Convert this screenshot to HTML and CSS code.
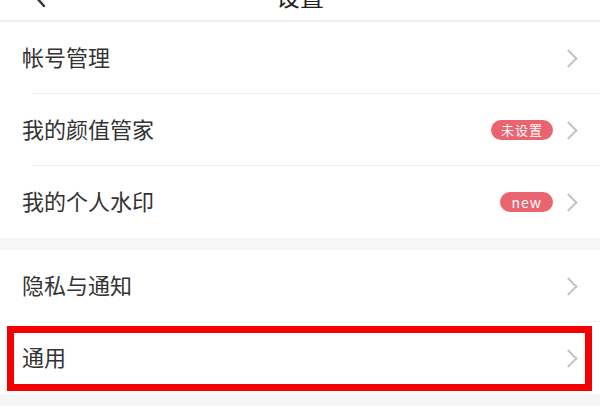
FILE: index.html
```html
<!DOCTYPE html>
<html lang="zh-CN">
<head>
    <meta charset="UTF-8">
    <meta name="viewport" content="width=device-width, initial-scale=1.0">
    <title>设置</title>
    <link rel="stylesheet" href="styles.css">
</head>
<body>
    <div class="header">
        <svg class="back" width="14" height="22" viewBox="0 0 14 22">
            <path d="M12 1 L3 11 L12 21" fill="none" stroke="#333" stroke-width="2.4" stroke-linecap="round" stroke-linejoin="round"/>
        </svg>
        <div class="title">设置</div>
    </div>

    <div class="group">
        <div class="row">
            <span class="label">帐号管理</span>
            <span class="chevron"></span>
        </div>
        <div class="row">
            <span class="label">我的颜值管家</span>
            <span class="badge">未设置</span>
            <span class="chevron"></span>
        </div>
        <div class="row last">
            <span class="label">我的个人水印</span>
            <span class="badge badge-new">new</span>
            <span class="chevron"></span>
        </div>
    </div>

    <div class="group">
        <div class="row">
            <span class="label">隐私与通知</span>
            <span class="chevron"></span>
        </div>
        <div class="row last highlight">
            <span class="label">通用</span>
            <span class="chevron"></span>
        </div>
    </div>
</body>
</html>
```

FILE: styles.css
```css
body {
    margin: 0;
    font-family: "Noto Sans CJK SC", "Noto Sans", sans-serif;
    background-color: #fff;
    color: #333;
}
.header {
    position: relative;
    height: 20px;
    overflow: hidden;
    border-bottom: 2px solid #ededed;
    display: flex;
    justify-content: center;
}
.back {
    position: absolute;
    left: 32px;
    top: -15px;
}
.title {
    font-size: 24px;
    line-height: 24px;
    margin-top: -16px;
    color: #222;
}
.group {
    border-bottom: 12px solid #f6f6f6;
}
.row {
    position: relative;
    height: 72px;
    display: flex;
    align-items: center;
    padding: 0 22px;
}
.row::before {
    content: "";
    position: absolute;
    left: 32px;
    right: 0;
    bottom: 0;
    border-bottom: 1px solid #f0f0f0;
}
.row.last::before {
    display: none;
}
.label {
    flex: 1;
    font-size: 22px;
    color: #333;
    margin-bottom: 5px;
}
.badge {
    background-color: #e9646f;
    color: #fff;
    font-size: 13px;
    line-height: 20px;
    height: 20px;
    padding: 0 10px;
    border-radius: 10px;
    margin-right: 9px;
    letter-spacing: 1px;
}
.badge-new {
    padding: 0 11px;
    font-size: 14px;
}
.chevron {
    width: 11px;
    height: 11px;
    border-top: 2px solid #c4c4c4;
    border-right: 2px solid #c4c4c4;
    transform: rotate(45deg);
    margin-right: 3px;
}
.highlight::after {
    content: "";
    position: absolute;
    left: 7px;
    right: 8px;
    top: 4px;
    bottom: 3px;
    border: 7px solid #f50000;
}
```
